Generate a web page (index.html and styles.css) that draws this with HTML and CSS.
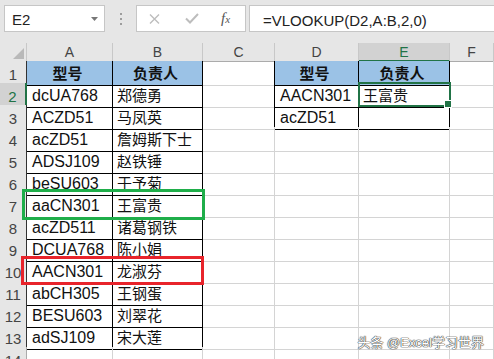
FILE: index.html
```html
<!DOCTYPE html>
<html lang="zh-CN">
<head>
	<meta charset="UTF-8">
	<title>VLOOKUP</title>
	<link rel="stylesheet" href="styles.css">
</head>
<body>
	<!-- 编辑栏 -->
	<div class="bar">
		<div class="namebox">
			<span>E2</span>
			<svg class="caret" width="7" height="4" viewBox="0 0 7 4"><path d="M0 0H7L3.5 4Z" fill="#777"/></svg>
		</div>
		<div class="grip"><i></i><i></i><i></i></div>
		<div class="fxbox">
			<svg class="cancel" width="11" height="10" viewBox="0 0 11 10"><path d="M1 .5L10 9.5M10 .5L1 9.5" stroke="#bdbdbd" stroke-width="1.4" fill="none"/></svg>
			<svg class="enter" width="14" height="11" viewBox="0 0 14 11"><path d="M1 5.5L5 9.5 13 1" stroke="#bdbdbd" stroke-width="2" fill="none"/></svg>
			<span class="fx">f<small>x</small></span>
		</div>
		<div class="formula">=VLOOKUP(D2,A:B,2,0)</div>
	</div>

	<!-- 表格 -->
	<div class="sheet">
		<div class="row top">
			<div class="ch corner"><svg width="11" height="11" viewBox="0 0 11 11"><path d="M11 0V11H0Z" fill="#b9b9b9"/></svg></div>
			<div class="ch">A</div>
			<div class="ch">B</div>
			<div class="ch">C</div>
			<div class="ch">D</div>
			<div class="ch sel">E</div>
			<div class="ch">F</div>
		</div>
		<div class="row">
			<div class="rh in">1</div>
			<div class="c t h">型号</div>
			<div class="c t h">负责人</div>
			<div class="c tl"></div>
			<div class="c t h">型号</div>
			<div class="c t h">负责人</div>
			<div class="c"></div>
		</div>
		<div class="row">
			<div class="rh in sel">2</div>
			<div class="c t">dcUA768</div>
			<div class="c t cn">郑德勇</div>
			<div class="c tl"></div>
			<div class="c t">AACN301</div>
			<div class="c t cn">王富贵</div>
			<div class="c"></div>
			<div class="active"></div>
		</div>
		<div class="row">
			<div class="rh in">3</div>
			<div class="c t">ACZD51</div>
			<div class="c t cn">马凤英</div>
			<div class="c tl"></div>
			<div class="c t">acZD51</div>
			<div class="c t"></div>
			<div class="c"></div>
		</div>
		<div class="row">
			<div class="rh in">4</div>
			<div class="c t">acZD51</div>
			<div class="c t cn">詹姆斯下士</div>
			<div class="c"></div>
			<div class="c"></div>
			<div class="c"></div>
			<div class="c"></div>
		</div>
		<div class="row">
			<div class="rh in">5</div>
			<div class="c t">ADSJ109</div>
			<div class="c t cn">赵铁锤</div>
			<div class="c"></div>
			<div class="c"></div>
			<div class="c"></div>
			<div class="c"></div>
		</div>
		<div class="row">
			<div class="rh in">6</div>
			<div class="c t">beSU603</div>
			<div class="c t cn">于予菊</div>
			<div class="c"></div>
			<div class="c"></div>
			<div class="c"></div>
			<div class="c"></div>
		</div>
		<div class="row">
			<div class="rh in">7</div>
			<div class="c t">aaCN301</div>
			<div class="c t cn">王富贵</div>
			<div class="c"></div>
			<div class="c"></div>
			<div class="c"></div>
			<div class="c"></div>
			<div class="mark green"></div>
		</div>
		<div class="row">
			<div class="rh in">8</div>
			<div class="c t">acZD511</div>
			<div class="c t cn">诸葛钢铁</div>
			<div class="c"></div>
			<div class="c"></div>
			<div class="c"></div>
			<div class="c"></div>
		</div>
		<div class="row">
			<div class="rh in">9</div>
			<div class="c t">DCUA768</div>
			<div class="c t cn">陈小娟</div>
			<div class="c"></div>
			<div class="c"></div>
			<div class="c"></div>
			<div class="c"></div>
		</div>
		<div class="row">
			<div class="rh in">10</div>
			<div class="c t">AACN301</div>
			<div class="c t cn">龙淑芬</div>
			<div class="c"></div>
			<div class="c"></div>
			<div class="c"></div>
			<div class="c"></div>
			<div class="mark red"></div>
		</div>
		<div class="row">
			<div class="rh in">11</div>
			<div class="c t">abCH305</div>
			<div class="c t cn">王钢蛋</div>
			<div class="c"></div>
			<div class="c"></div>
			<div class="c"></div>
			<div class="c"></div>
		</div>
		<div class="row">
			<div class="rh in">12</div>
			<div class="c t">BESU603</div>
			<div class="c t cn">刘翠花</div>
			<div class="c"></div>
			<div class="c"></div>
			<div class="c"></div>
			<div class="c"></div>
		</div>
		<div class="row">
			<div class="rh in">13</div>
			<div class="c t">adSJ109</div>
			<div class="c t cn">宋大莲</div>
			<div class="c"></div>
			<div class="c"></div>
			<div class="c"></div>
			<div class="c"></div>
		</div>
		<div class="row">
			<div class="rh">14</div>
			<div class="c"></div>
			<div class="c"></div>
			<div class="c"></div>
			<div class="c"></div>
			<div class="c"></div>
			<div class="c"></div>
		</div>
	</div>

	<div class="watermark">头条 @Excel学习世界</div>
</body>
</html>
```

FILE: styles.css
```css
*{
	margin: 0;
	padding: 0;
	box-sizing: border-box;
}
body{
	width: 494px;
	height: 359px;
	overflow: hidden;
	position: relative;
	background: #fff;
	font-family: "Liberation Sans", "Noto Sans CJK SC", sans-serif;
	color: #111;
}

/* 编辑栏 */
.bar{
	height: 43px;
	background: #e6e6e6;
	display: flex;
	align-items: flex-start;
	padding: 5px 0 0 4px;
}
.namebox{
	width: 101px;
	height: 27px;
	background: #fff;
	border: 1px solid #c6c6c6;
	display: flex;
	align-items: center;
	padding: 1px 6px 0 7px;
	font-size: 15px;
	color: #222;
}
.namebox .caret{
	margin-left: auto;
}
.grip{
	display: flex;
	flex-direction: column;
	gap: 3px;
	margin: 8px 14px 0 15px;
}
.grip i{
	display: block;
	width: 2px;
	height: 2px;
	background: #9d9d9d;
}
.fxbox{
	width: 110px;
	height: 27px;
	background: #fff;
	border: 1px solid #c6c6c6;
	display: flex;
	align-items: center;
	padding-left: 12px;
}
.fxbox .enter{
	margin-left: 25px;
}
.fxbox .fx{
	margin-left: 22px;
	font-family: "Liberation Serif", serif;
	font-style: italic;
	font-size: 15px;
	color: #555;
}
.fxbox .fx small{
	font-size: 11px;
}
.formula{
	flex: 1;
	margin-left: 3px;
	margin-right: -2px;
	height: 27px;
	background: #fff;
	border: 1px solid #c6c6c6;
	padding: 4px 0 0 13px;
	font-size: 15px;
	line-height: 21px;
	color: #222;
	white-space: nowrap;
}

/* 表格 */
.row{
	display: grid;
	grid-template-columns: 27px 86px 90px 72px 84px 91px 1fr;
	height: 22px;
	position: relative;
}
.row.top{
	height: 18px;
}
.ch{
	background: #e6e6e6;
	border-right: 1px solid #c8c8c8;
	border-bottom: 1px solid #ababab;
	text-align: center;
	font-size: 14px;
	line-height: 15px;
	padding-top: 2px;
	color: #444;
}
.ch.corner{
	display: flex;
	justify-content: flex-end;
	align-items: flex-end;
	padding: 0 2px 2px 0;
}
.ch.sel{
	background: #d2d2d2;
	color: #217346;
	border-bottom: 2px solid #217346;
}
.rh{
	background: #e6e6e6;
	border-right: 1px solid #ababab;
	border-bottom: 1px solid #d4d4d4;
	text-align: center;
	font-size: 15px;
	line-height: 21px;
	padding-top: 3px;
	color: #444;
}
.rh.in{
	border-right-color: #333;
}
.rh.sel{
	background: #d2d2d2;
	color: #217346;
	border-right: 2px solid #217346;
}
.c{
	border-right: 1px solid #d4d4d4;
	border-bottom: 1px solid #d4d4d4;
	padding: 2px 4px 0 5px;
	font-size: 16px;
	line-height: 21px;
	white-space: nowrap;
}
.c.t{
	border-right-color: #000;
	border-bottom-color: #000;
}
.c.tl{
	border-right-color: #000;
}
.c.cn{
	font-size: 15px;
	padding-left: 4px;
}
.c.h{
	background: #9bc2e6;
	font-weight: bold;
	font-size: 15px;
	text-align: center;
	padding-left: 0;
}

/* 当前单元格 E2 */
.active{
	position: absolute;
	left: 358px;
	top: -1px;
	width: 93px;
	height: 25px;
	border: 2px solid #217346;
	z-index: 3;
}
.active::after{
	content: "";
	position: absolute;
	right: -3px;
	bottom: -3px;
	width: 6px;
	height: 6px;
	background: #217346;
	border: 1px solid #fff;
}

/* 标注框 */
.mark{
	position: absolute;
	border: 3px solid;
	z-index: 2;
}
.mark.green{
	border-color: #1fae4a;
	left: 22px;
	top: -4px;
	width: 183px;
	height: 31px;
}
.mark.red{
	border-color: #e8242b;
	left: 21px;
	top: -3px;
	width: 183px;
	height: 29px;
}

.watermark{
	position: absolute;
	right: 10px;
	bottom: 8px;
	font-size: 13px;
	line-height: 16px;
	color: #fff;
	white-space: nowrap;
	text-shadow: 0 0 1px #333, 0 0 1px #333, 0 0 1px #333;
	z-index: 4;
}
```
